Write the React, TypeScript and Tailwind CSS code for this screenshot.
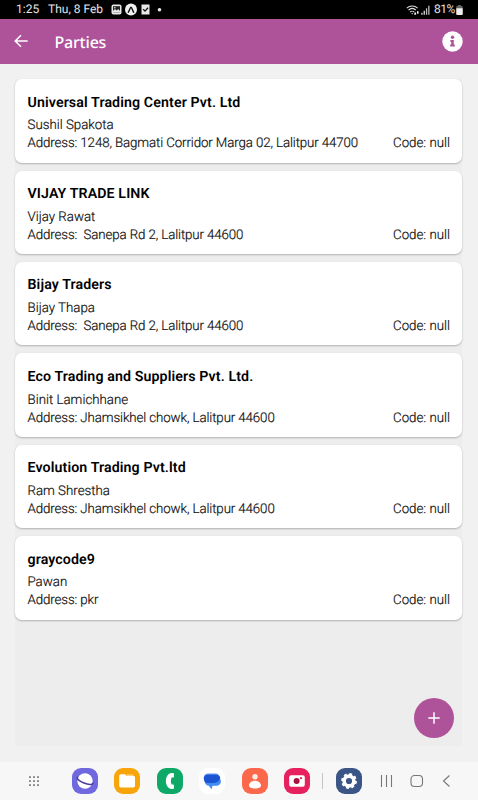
import { ReactNode } from 'react';

interface Party {
  name: string;
  contact: string;
  address: string;
  code: string | null;
}

const parties: Party[] = [
  { name: 'Universal Trading Center Pvt. Ltd', contact: 'Sushil Spakota', address: '1248, Bagmati Corridor Marga 02, Lalitpur 44700', code: null },
  { name: 'VIJAY TRADE LINK', contact: 'Vijay Rawat', address: ' Sanepa Rd 2, Lalitpur 44600', code: null },
  { name: 'Bijay Traders', contact: 'Bijay Thapa', address: ' Sanepa Rd 2, Lalitpur 44600', code: null },
  { name: 'Eco Trading and Suppliers Pvt. Ltd.', contact: 'Binit Lamichhane', address: 'Jhamsikhel chowk, Lalitpur 44600', code: null },
  { name: 'Evolution Trading Pvt.ltd', contact: 'Ram Shrestha', address: 'Jhamsikhel chowk, Lalitpur 44600', code: null },
  { name: 'graycode9', contact: 'Pawan', address: 'pkr', code: null }
];

function StatusBar() {
  return (
    <div className="flex h-[19px] items-center bg-black pl-[16px] pr-[15px] text-[12px] leading-[19px] text-[#e4e4e4]">
      <span className="w-[32px]">1:25</span>
      <span className="w-[63px]">Thu, 8 Feb</span>
      <svg className="h-[13px] w-[52px]" viewBox="0 0 52 13">
        <rect x="0.5" y="1.5" width="10" height="10" rx="2" fill="#e8e8e8" />
        <path d="M2 3.2h7v6.3H2z" fill="#222" />
        <path d="M2 9.5V8l2-2 1.7 1.6L7.3 6 9 8v1.5z" fill="#e8e8e8" />
        <circle cx="3.8" cy="4.7" r="0.8" fill="#e8e8e8" />
        <circle cx="20" cy="6.5" r="6" fill="#f0f0f0" />
        <path d="M17.3 9.2c1.2-1.2 1.7-4.9 2.7-4.9s1.5 3.7 2.7 4.9" fill="none" stroke="#111" strokeWidth="1.4" strokeLinecap="round" />
        <path d="M30.5 1.5h8v10h-8z" fill="#e8e8e8" />
        <path d="m32.2 6.3 1.8 1.8 3-3.3" fill="none" stroke="#111" strokeWidth="1.3" />
        <circle cx="48.5" cy="6.7" r="1.8" fill="#e8e8e8" />
      </svg>
      <svg className="ml-auto h-[12px] w-[26px]" viewBox="0 0 26 12">
        <g fill="none" stroke="#ddd" strokeWidth="1.1">
          <path d="M.8 4.2c3-3 7.8-3 10.8 0" />
          <path d="M2.5 6.2c2.2-2.1 5.2-2.1 7.4 0" />
          <path d="M4.2 8c1.1-1.1 2.9-1.1 4 0" />
        </g>
        <path d="M5.2 9.2h2l-1 1.2zM8.3 8.5h1.8v2.2H8.3zM11 7.3h1.6v2.5H11z" fill="#eee" />
        <path d="M15.3 8.8h1.3v2h-1.3zM17.6 6.8h1.3v4h-1.3z" fill="#ddd" />
        <path d="M19.9 4.3h1.3v6.5h-1.3zM22.2 1.8h1.3v9h-1.3z" fill="#bbb" />
      </svg>
      <span className="ml-[2px] mr-[1px] text-[12px] tracking-[-0.4px]">81%</span>
      <svg className="h-[10px] w-[7px]" viewBox="0 0 7 11">
        <path d="M2 0h3v1.2h1q1 0 1 1V10q0 1-1 1H1q-1 0-1-1V2.2q0-1 1-1h1z" fill="#666" />
        <path d="M0 3.5h7V10q0 1-1 1H1q-1 0-1-1z" fill="#eee" />
      </svg>
    </div>
  );
}

function Header() {
  return (
    <header className="flex h-[45px] items-center bg-[#ae529a] pl-[14px] pr-[15px] text-white">
      <svg className="mb-[2px] h-[14px] w-[14px]" viewBox="0 0 14 14" fill="none" stroke="white" strokeWidth="1.5">
        <path d="M13.7 7H1.7M7 1.2 1.2 7 7 12.8" />
      </svg>
      <h1 className="ml-[26.5px] font-['Noto_Sans'] text-[16px] font-medium leading-[22px] tracking-[-0.2px]">Parties</h1>
      <svg className="ml-auto h-[21px] w-[21px]" viewBox="0 0 21 21">
        <circle cx="10.5" cy="10.5" r="10.2" fill="white" />
        <circle cx="10.5" cy="6.2" r="1.7" fill="#ae529a" />
        <path d="M8.4 9h3.4v4.5h1v1.9H8.2v-1.9h1v-2.6h-.8z" fill="#ae529a" />
      </svg>
    </header>
  );
}

function PartyCard({ party }: { party: Party }) {
  return (
    <div className="h-[83.4px] shrink-0 rounded-[7px] bg-white pl-[12.5px] pr-[12px] pt-[14.4px] text-[13.3px] font-light leading-[18px] text-[#111] shadow-[0_1px_2px_rgba(0,0,0,0.26)]">
      <div className="mb-[4.7px] text-[14.2px] font-semibold leading-[19px] tracking-[0.11px] text-black">{party.name}</div>
      <div className="[-webkit-text-stroke:0.2px_#111]">{party.contact}</div>
      <div className="flex justify-between whitespace-pre [-webkit-text-stroke:0.2px_#111]">
        <span className="tracking-[-0.11px]">Address: {party.address}</span>
        <span>Code: {String(party.code)}</span>
      </div>
    </div>
  );
}

function AppIcon({ className, children }: { className: string; children: ReactNode }) {
  return (
    <div className={`h-[26px] w-[26px] shrink-0 rounded-[9px] ${className}`}>
      <svg className="h-full w-full" viewBox="0 0 26 26">
        {children}
      </svg>
    </div>
  );
}

function NavBar() {
  return (
    <nav className="flex h-[38px] items-center bg-[#f7f7f7] pl-[29px]">
      <svg className="h-[10px] w-[10px]" viewBox="0 0 10 10" fill="#333">
        {[1, 5, 9].map((y) => [1, 5, 9].map((x) => <circle key={`${x}-${y}`} cx={x} cy={y} r="0.85" />))}
      </svg>
      <div className="ml-[33px] flex gap-[16.4px]">
        <AppIcon className="bg-[#6f68df]">
          <circle cx="13" cy="13" r="7.7" fill="white" />
          <path d="M5.5 9.3C2.8 12.5 20.3 19.4 21 15.2" fill="none" stroke="#4b3b9b" strokeWidth="1.5" strokeLinecap="round" />
        </AppIcon>
        <AppIcon className="bg-[#f7a50b]">
          <path d="M5.2 8q0-1.8 1.8-1.8h4l1.6 1.6h6.6q1.8 0 1.8 1.8v8.2q0 1.8-1.8 1.8H7q-1.8 0-1.8-1.8z" fill="white" />
          <path d="M12.4 6.5h6.1l1.1 1.2h-6z" fill="#ffdc92" />
        </AppIcon>
        <AppIcon className="bg-[#0fa967]">
          <path d="M13.2 5.3 16 4.9q1 0 1 1v2.7q0 1-1 1h-1.4c-1 2.3-1 4.7 0 6.9H16q1 0 1 1v2.6q0 1-1 1h-2c-6.4-1.7-7-13.5-.8-15.8z" fill="white" />
        </AppIcon>
        <AppIcon className="bg-white">
          <path d="M9 5.5h7.5a4.3 4.3 0 0 1 4.3 4.3v1H4.7v-1A4.3 4.3 0 0 1 9 5.5z" fill="#5d8fee" />
          <path d="M9 9h8.5a4.4 4.4 0 0 1 0 8.8h-4l-.8 3.4-3.2-3.6A4.4 4.4 0 0 1 9 9z" fill="#438cf4" />
          <path d="M9 6.800h8a4.600 4.600 0 0 1 4.300 3c-1 3.300-3.200 5.200-6.300 5.200H9a4.100 4.100 0 0 1 0-8.200z" fill="#1b55d2" />
        </AppIcon>
        <AppIcon className="bg-[#fb684b]">
          <circle cx="13" cy="8.7" r="2.7" fill="#ffece4" />
          <path d="M13 12.7c3.4 0 6 2.4 6 4.6s-2.5 3.2-6 3.2-6-1-6-3.2 2.6-4.6 6-4.6z" fill="white" />
        </AppIcon>
        <AppIcon className="bg-[#e72060]">
          <rect x="5.2" y="7.2" width="15.6" height="11.6" rx="2" fill="white" />
          <circle cx="12.6" cy="13" r="3" fill="#a91042" />
          <circle cx="17" cy="10.2" r="1.1" fill="#d71f5a" />
        </AppIcon>
      </div>
      <div className="ml-[12.5px] h-[16px] w-px bg-[#c4c4c4]" />
      <div className="ml-[13px]">
        <AppIcon className="bg-[#3b5686]">
          <circle cx="13" cy="13" r="4.9" fill="none" stroke="white" strokeWidth="3.6" />
          <circle cx="13" cy="13" r="7" fill="none" stroke="white" strokeWidth="1.8" strokeDasharray="2.9 2.598" />
        </AppIcon>
      </div>
      <svg className="ml-[18px] h-[14px] w-[72px]" viewBox="0 0 72 14" fill="none" stroke="#777" strokeWidth="1.1">
        <path d="M1.5 1v12M6.5 1v12M11.5 1v12" />
        <rect x="31" y="1.5" width="11.5" height="11" rx="3.5" />
        <path d="m69.5 1.5-6 5.5 6 5.5" />
      </svg>
    </nav>
  );
}

export default function App() {
  return (
    <div className="flex h-[800px] w-[478px] flex-col overflow-hidden bg-[#f1f1f1] font-['Roboto',sans-serif] [text-rendering:geometricPrecision]">
      <StatusBar />
      <Header />
      <main className="relative flex-1 pl-[15px] pr-[16px] pt-[15.3px]">
        <div className="flex h-[667px] flex-col gap-[8px] bg-[#ededed]">
          {parties.map((party) => (
            <PartyCard key={party.name} party={party} />
          ))}
        </div>
        <button className="absolute right-[24px] top-[634px] flex h-[40px] w-[40px] items-center justify-center rounded-full bg-[#ae529a]">
          <svg className="h-[12px] w-[12px]" viewBox="0 0 12 12" stroke="white" strokeWidth="1.5">
            <path d="M6 .3v11.4M.3 6h11.4" />
          </svg>
        </button>
      </main>
      <NavBar />
    </div>
  );
}
